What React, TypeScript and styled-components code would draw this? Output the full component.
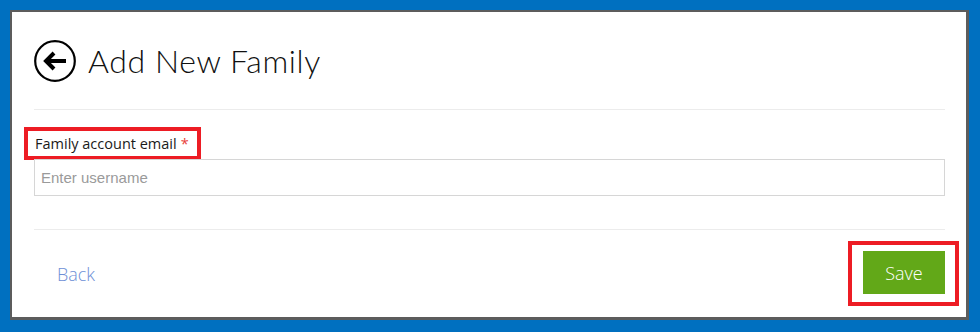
import React from 'react';
import styled, { createGlobalStyle } from 'styled-components';

const GlobalStyle = createGlobalStyle`
  html, body {
    margin: 0;
    padding: 0;
    background: #0070c0;
  }
  * {
    box-sizing: border-box;
  }
`;

const Panel = styled.div`
  margin: 10px 11px 12px 10px;
  height: 310px;
  background: #ffffff;
  border-style: solid;
  border-color: #5c5c5c;
  border-width: 2px 3px 3px 2px;
  padding: 0 21px 0 22px;
  display: flex;
  flex-direction: column;
`;

const Header = styled.div`
  height: 98px;
  display: flex;
  align-items: center;
  gap: 12px;
  border-bottom: 1px solid #ececec;
`;

const BackCircle = styled.button`
  width: 42px;
  height: 42px;
  padding: 0;
  border: none;
  background: none;
  display: flex;
  cursor: pointer;
`;

const Title = styled.h1`
  margin: 0;
  font-family: Lato, 'Open Sans', sans-serif;
  font-weight: 300;
  font-size: 32px;
  color: #111;
  letter-spacing: 0.6px;
`;

const Form = styled.div`
  padding-top: 21px;
  padding-bottom: 33px;
  border-bottom: 1px solid #ececec;
  display: flex;
  flex-direction: column;
  align-items: flex-start;
`;

const Label = styled.label`
  display: inline-block;
  margin-left: -6px;
  margin-bottom: 3px;
  padding: 4px 8px 3px 7px;
  outline: 4px solid #ed1c24;
  font-family: 'Open Sans', sans-serif;
  font-size: 14.5px;
  line-height: 18px;
  color: #1a1a1a;
`;

const Required = styled.span`
  color: #e8403a;
  margin-left: 4px;
`;

const Input = styled.input`
  width: 100%;
  height: 37px;
  border: 1px solid #d6d6d6;
  padding: 0 6px;
  font-family: 'Liberation Sans', Arial, sans-serif;
  font-size: 15px;
  color: #333;
  outline: none;

  &::placeholder {
    color: #9a9a9a;
  }
`;

const Footer = styled.div`
  flex: 1;
  display: flex;
  align-items: center;
  justify-content: space-between;
`;

const BackLink = styled.a`
  margin-left: 23px;
  font-family: 'Open Sans', sans-serif;
  font-weight: 300;
  font-size: 18px;
  color: #6e8fd6;
  text-decoration: none;
  cursor: pointer;
`;

const Highlight = styled.span`
  display: inline-flex;
  margin-right: -10px;
  padding: 6px 10px 8px 11px;
  outline: 4px solid #ed1c24;
`;

const SaveButton = styled.button`
  width: 82px;
  height: 43px;
  border: none;
  background: #62a818;
  color: #ffffff;
  font-family: 'Open Sans', sans-serif;
  font-weight: 300;
  font-size: 18px;
  cursor: pointer;
`;

const ArrowIcon = () => (
  <svg width="42" height="42" viewBox="0 0 42 42">
    <circle cx="21" cy="21" r="19.8" fill="none" stroke="#000" strokeWidth="2.2" />
    <path d="M12 21 H32" stroke="#000" strokeWidth="4" />
    <path d="M20 13 L12 21 L20 29" fill="none" stroke="#000" strokeWidth="4" strokeLinejoin="miter" />
  </svg>
);

const App: React.FC = () => {
  return (
    <>
      <GlobalStyle />
      <Panel>
        <Header>
          <BackCircle aria-label="Back">
            <ArrowIcon />
          </BackCircle>
          <Title>Add New Family</Title>
        </Header>

        <Form>
          <Label htmlFor="family-email">
            Family account email<Required>*</Required>
          </Label>
          <Input id="family-email" type="text" placeholder="Enter username" />
        </Form>

        <Footer>
          <BackLink>Back</BackLink>
          <Highlight>
            <SaveButton>Save</SaveButton>
          </Highlight>
        </Footer>
      </Panel>
    </>
  );
};

export default App;
